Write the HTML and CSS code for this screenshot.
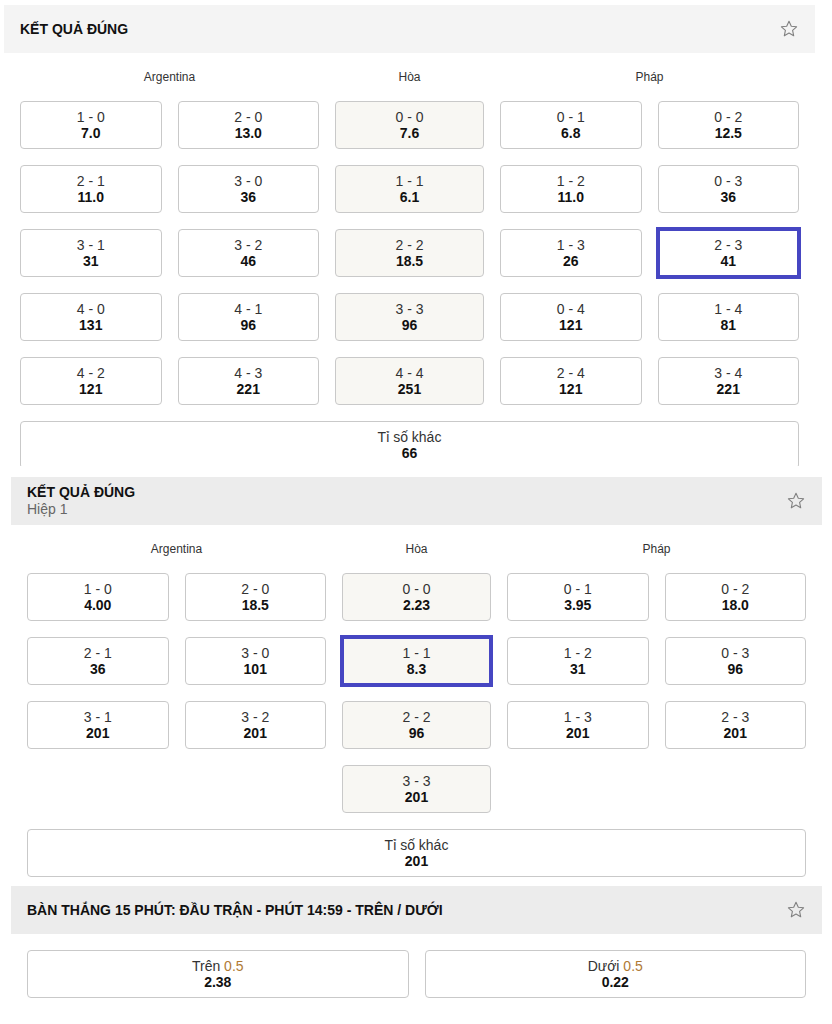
FILE: index.html
```html
<!DOCTYPE html>
<html lang="vi">
<head>
    <meta charset="UTF-8">
    <meta name="viewport" content="width=device-width, initial-scale=1.0">
    <title>Kết quả đúng</title>
    <link rel="stylesheet" href="styles.css">
</head>
<body>
    <div class="market market-first">
        <div class="market-header">
            <div class="market-title">KẾT QUẢ ĐÚNG</div>
            <svg class="star" viewBox="0 0 20 20"><path d="M10 2.2 L12.3 7.2 L17.6 7.8 L13.6 11.4 L14.7 16.8 L10 14.1 L5.3 16.8 L6.4 11.4 L2.4 7.8 L7.7 7.2 Z"/></svg>
        </div>
        <div class="market-body">
            <div class="grid labels">
                <div class="team-home">Argentina</div>
                <div class="team-draw">Hòa</div>
                <div class="team-away">Pháp</div>
            </div>
            <div class="grid">
                <div class="odd"><span class="pick">1 - 0</span><b>7.0</b></div>
                <div class="odd"><span class="pick">2 - 0</span><b>13.0</b></div>
                <div class="odd draw"><span class="pick">0 - 0</span><b>7.6</b></div>
                <div class="odd"><span class="pick">0 - 1</span><b>6.8</b></div>
                <div class="odd"><span class="pick">0 - 2</span><b>12.5</b></div>

                <div class="odd"><span class="pick">2 - 1</span><b>11.0</b></div>
                <div class="odd"><span class="pick">3 - 0</span><b>36</b></div>
                <div class="odd draw"><span class="pick">1 - 1</span><b>6.1</b></div>
                <div class="odd"><span class="pick">1 - 2</span><b>11.0</b></div>
                <div class="odd"><span class="pick">0 - 3</span><b>36</b></div>

                <div class="odd"><span class="pick">3 - 1</span><b>31</b></div>
                <div class="odd"><span class="pick">3 - 2</span><b>46</b></div>
                <div class="odd draw"><span class="pick">2 - 2</span><b>18.5</b></div>
                <div class="odd"><span class="pick">1 - 3</span><b>26</b></div>
                <div class="odd selected"><span class="pick">2 - 3</span><b>41</b></div>

                <div class="odd"><span class="pick">4 - 0</span><b>131</b></div>
                <div class="odd"><span class="pick">4 - 1</span><b>96</b></div>
                <div class="odd draw"><span class="pick">3 - 3</span><b>96</b></div>
                <div class="odd"><span class="pick">0 - 4</span><b>121</b></div>
                <div class="odd"><span class="pick">1 - 4</span><b>81</b></div>

                <div class="odd"><span class="pick">4 - 2</span><b>121</b></div>
                <div class="odd"><span class="pick">4 - 3</span><b>221</b></div>
                <div class="odd draw"><span class="pick">4 - 4</span><b>251</b></div>
                <div class="odd"><span class="pick">2 - 4</span><b>121</b></div>
                <div class="odd"><span class="pick">3 - 4</span><b>221</b></div>
            </div>
            <div class="odd other"><span class="pick">Tỉ số khác</span><b>66</b></div>
        </div>
    </div>

    <div class="market">
        <div class="market-header">
            <div>
                <div class="market-title">KẾT QUẢ ĐÚNG</div>
                <div class="market-sub">Hiệp 1</div>
            </div>
            <svg class="star" viewBox="0 0 20 20"><path d="M10 2.2 L12.3 7.2 L17.6 7.8 L13.6 11.4 L14.7 16.8 L10 14.1 L5.3 16.8 L6.4 11.4 L2.4 7.8 L7.7 7.2 Z"/></svg>
        </div>
        <div class="market-body">
            <div class="grid labels">
                <div class="team-home">Argentina</div>
                <div class="team-draw">Hòa</div>
                <div class="team-away">Pháp</div>
            </div>
            <div class="grid">
                <div class="odd"><span class="pick">1 - 0</span><b>4.00</b></div>
                <div class="odd"><span class="pick">2 - 0</span><b>18.5</b></div>
                <div class="odd draw"><span class="pick">0 - 0</span><b>2.23</b></div>
                <div class="odd"><span class="pick">0 - 1</span><b>3.95</b></div>
                <div class="odd"><span class="pick">0 - 2</span><b>18.0</b></div>

                <div class="odd"><span class="pick">2 - 1</span><b>36</b></div>
                <div class="odd"><span class="pick">3 - 0</span><b>101</b></div>
                <div class="odd draw selected"><span class="pick">1 - 1</span><b>8.3</b></div>
                <div class="odd"><span class="pick">1 - 2</span><b>31</b></div>
                <div class="odd"><span class="pick">0 - 3</span><b>96</b></div>

                <div class="odd"><span class="pick">3 - 1</span><b>201</b></div>
                <div class="odd"><span class="pick">3 - 2</span><b>201</b></div>
                <div class="odd draw"><span class="pick">2 - 2</span><b>96</b></div>
                <div class="odd"><span class="pick">1 - 3</span><b>201</b></div>
                <div class="odd"><span class="pick">2 - 3</span><b>201</b></div>

                <div class="odd draw draw-only"><span class="pick">3 - 3</span><b>201</b></div>
            </div>
            <div class="odd other"><span class="pick">Tỉ số khác</span><b>201</b></div>
        </div>
    </div>

    <div class="market">
        <div class="market-header">
            <div class="market-title">BÀN THẮNG 15 PHÚT: ĐẦU TRẬN - PHÚT 14:59 - TRÊN / DƯỚI</div>
            <svg class="star" viewBox="0 0 20 20"><path d="M10 2.2 L12.3 7.2 L17.6 7.8 L13.6 11.4 L14.7 16.8 L10 14.1 L5.3 16.8 L6.4 11.4 L2.4 7.8 L7.7 7.2 Z"/></svg>
        </div>
        <div class="market-body">
            <div class="grid-two">
                <div class="odd"><span class="pick">Trên <em>0.5</em></span><b>2.38</b></div>
                <div class="odd"><span class="pick">Dưới <em>0.5</em></span><b>0.22</b></div>
            </div>
        </div>
    </div>
</body>
</html>
```

FILE: styles.css
```css
body {
    margin: 0;
    font-family: "Liberation Sans", Arial, sans-serif;
    font-size: 14px;
    color: #111;
    background: #fff;
}

.market {
    width: 811px;
    margin-left: 11px;
    margin-bottom: 9px;
}
.market-first {
    margin-left: 4px;
    padding-top: 5px;
    height: 461px;
    overflow: hidden;
    margin-bottom: 11px;
}

.market-header {
    height: 48px;
    background: #ececec;
    display: flex;
    align-items: center;
    justify-content: space-between;
    padding: 0 16px;
}
.market-first .market-header {
    background: #f4f4f4;
}
.market-title {
    font-weight: bold;
    font-size: 14px;
    line-height: 17px;
    color: #111;
}
.market-sub {
    font-size: 14px;
    line-height: 17px;
    color: #666;
}
.star {
    width: 20px;
    height: 20px;
    fill: none;
    stroke: #808080;
    stroke-width: 1.1;
    stroke-linejoin: round;
}

.market-body {
    padding: 0 16px;
}

.grid {
    display: grid;
    grid-template-columns: 1fr 1fr 149px 1fr 1fr;
    gap: 16px;
}
.labels {
    margin: 16px 0;
    font-size: 12px;
    line-height: 16px;
    color: #333;
    text-align: center;
}
.team-home {
    grid-column: 1 / 3;
}
.team-draw {
    grid-column: 3;
}
.team-away {
    grid-column: 4 / 6;
}

.odd {
    height: 48px;
    box-sizing: border-box;
    border: 1px solid #c9c9c9;
    border-radius: 4px;
    background: #fff;
    display: flex;
    flex-direction: column;
    align-items: center;
    justify-content: center;
    line-height: 16px;
    text-align: center;
}
.odd .pick {
    color: #333;
    font-size: 14px;
}
.odd b {
    font-size: 14px;
    color: #111;
}
.odd em {
    font-style: normal;
    color: #b07a35;
}
.odd.draw {
    background: #f8f7f3;
}
.odd.draw-only {
    grid-column: 3;
}
.odd.selected {
    border-color: #4646c2;
    outline: 4px solid #4646c2;
    outline-offset: -2px;
    border-radius: 0;
}
.other {
    margin-top: 16px;
}

.grid-two {
    display: grid;
    grid-template-columns: 1fr 1fr;
    gap: 16px;
    margin-top: 16px;
}
```
